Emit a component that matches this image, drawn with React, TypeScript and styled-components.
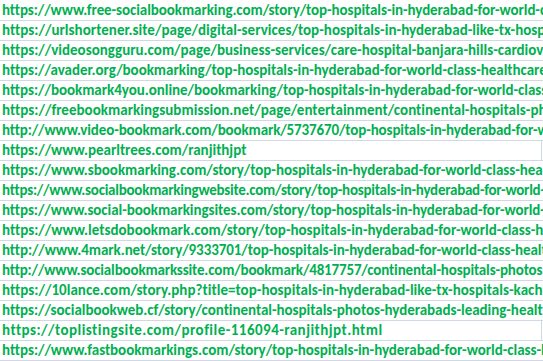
import React, { useMemo } from "react";
import styled, { createGlobalStyle } from "styled-components";

const GlobalStyle = createGlobalStyle`
  html, body {
    margin: 0;
    padding: 0;
    background: #ffffff;
    overflow: hidden;
  }
  body {
    font-family: Carlito, Calibri, "Liberation Sans", sans-serif;
  }
`;

const FONT_SIZE = 15;
const FONT = `bold ${FONT_SIZE}px Carlito, Calibri, "Liberation Sans", sans-serif`;
const ORIGIN = 2;

const Sheet = styled.div`
  width: 543px;
  height: 361px;
  overflow: hidden;
  padding-top: 1px;
  box-sizing: border-box;
  background: #ffffff;
`;

const Row = styled.div`
  display: flex;
  height: 20px;
  box-sizing: border-box;
  border-bottom: 1px solid #d0d7e5;
`;

const Cell = styled.div<{ $fits: boolean }>`
  flex: 0 0 542px;
  width: 542px;
  box-sizing: border-box;
  padding-left: ${ORIGIN}px;
  border-right: 1px solid ${(p) => (p.$fits ? "#d0d7e5" : "transparent")};
  white-space: nowrap;
  overflow: visible;
  font-family: Carlito, Calibri, "Liberation Sans", sans-serif;
  font-weight: bold;
  font-size: ${FONT_SIZE}px;
  line-height: 18px;
  color: #00b050;
`;

type Entry = { url: string; fit: string; end: number; fits?: boolean };

const rows: Entry[] = [
  {
    url: "https://www.free-socialbookmarking.com/story/top-hospitals-in-hyderabad-for-world-class-healthcare",
    fit: "https://www.free-socialbookmarking.com/story/top-hospitals-in-hyderabad-for-world",
    end: 535,
  },
  {
    url: "https://urlshortener.site/page/digital-services/top-hospitals-in-hyderabad-like-tx-hospitals",
    fit: "https://urlshortener.site/page/digital-services/top-hospitals-in-hyderabad-like-tx-hos",
    end: 537,
  },
  {
    url: "https://videosongguru.com/page/business-services/care-hospital-banjara-hills-cardiovascular",
    fit: "https://videosongguru.com/page/business-services/care-hospital-banjara-hills-cardio",
    end: 536,
  },
  {
    url: "https://avader.org/bookmarking/top-hospitals-in-hyderabad-for-world-class-healthcare",
    fit: "https://avader.org/bookmarking/top-hospitals-in-hyderabad-for-world-class-healthcar",
    end: 539,
  },
  {
    url: "https://bookmark4you.online/bookmarking/top-hospitals-in-hyderabad-for-world-class-healthcare",
    fit: "https://bookmark4you.online/bookmarking/top-hospitals-in-hyderabad-for-world-cla",
    end: 535,
  },
  {
    url: "https://freebookmarkingsubmission.net/page/entertainment/continental-hospitals-photos",
    fit: "https://freebookmarkingsubmission.net/page/entertainment/continental-hospitals-p",
    end: 538,
  },
  {
    url: "http://www.video-bookmark.com/bookmark/5737670/top-hospitals-in-hyderabad-for-world-class",
    fit: "http://www.video-bookmark.com/bookmark/5737670/top-hospitals-in-hyderabad-for-",
    end: 537,
  },
  {
    url: "https://www.pearltrees.com/ranjithjpt",
    fit: "https://www.pearltrees.com/ranjithjpt",
    end: 246,
    fits: true,
  },
  {
    url: "https://www.sbookmarking.com/story/top-hospitals-in-hyderabad-for-world-class-healthcare",
    fit: "https://www.sbookmarking.com/story/top-hospitals-in-hyderabad-for-world-class-he",
    end: 535,
  },
  {
    url: "https://www.socialbookmarkingwebsite.com/story/top-hospitals-in-hyderabad-for-world-class-healthcare",
    fit: "https://www.socialbookmarkingwebsite.com/story/top-hospitals-in-hyderabad-for-world",
    end: 540,
  },
  {
    url: "https://www.social-bookmarkingsites.com/story/top-hospitals-in-hyderabad-for-world-class-healthcare",
    fit: "https://www.social-bookmarkingsites.com/story/top-hospitals-in-hyderabad-for-world",
    end: 540,
  },
  {
    url: "https://www.letsdobookmark.com/story/top-hospitals-in-hyderabad-for-world-class-healthcare",
    fit: "https://www.letsdobookmark.com/story/top-hospitals-in-hyderabad-for-world-class-",
    end: 535,
  },
  {
    url: "http://www.4mark.net/story/9333701/top-hospitals-in-hyderabad-for-world-class-healthcare",
    fit: "http://www.4mark.net/story/9333701/top-hospitals-in-hyderabad-for-world-class-heal",
    end: 541,
  },
  {
    url: "http://www.socialbookmarkssite.com/bookmark/4817757/continental-hospitals-photos",
    fit: "http://www.socialbookmarkssite.com/bookmark/4817757/continental-hospitals-photo",
    end: 536,
  },
  {
    url: "https://10lance.com/story.php?title=top-hospitals-in-hyderabad-like-tx-hospitals-kachiguda",
    fit: "https://10lance.com/story.php?title=top-hospitals-in-hyderabad-like-tx-hospitals-kach",
    end: 542,
  },
  {
    url: "https://socialbookweb.cf/story/continental-hospitals-photos-hyderabads-leading-healthcare",
    fit: "https://socialbookweb.cf/story/continental-hospitals-photos-hyderabads-leading-heal",
    end: 537,
  },
  {
    url: "https://toplistingsite.com/profile-116094-ranjithjpt.html",
    fit: "https://toplistingsite.com/profile-116094-ranjithjpt.html",
    end: 382,
    fits: true,
  },
  {
    url: "https://www.fastbookmarkings.com/story/top-hospitals-in-hyderabad-for-world-class-healthcare",
    fit: "https://www.fastbookmarkings.com/story/top-hospitals-in-hyderabad-for-world-class",
    end: 536,
  },
];

function useSpacings(): number[] {
  return useMemo(() => {
    const ctx = document.createElement("canvas").getContext("2d");
    if (!ctx) return rows.map(() => 0);
    ctx.font = FONT;
    return rows.map((r) => {
      const natural = ctx.measureText(r.fit).width;
      return (r.end - ORIGIN - natural) / r.fit.length;
    });
  }, []);
}

export default function App() {
  const spacings = useSpacings();
  return (
    <>
      <GlobalStyle />
      <Sheet>
        {rows.map((r, i) => (
          <Row key={i}>
            <Cell $fits={!!r.fits} style={{ letterSpacing: `${spacings[i].toFixed(3)}px` }}>
              {r.url}
            </Cell>
          </Row>
        ))}
      </Sheet>
    </>
  );
}
